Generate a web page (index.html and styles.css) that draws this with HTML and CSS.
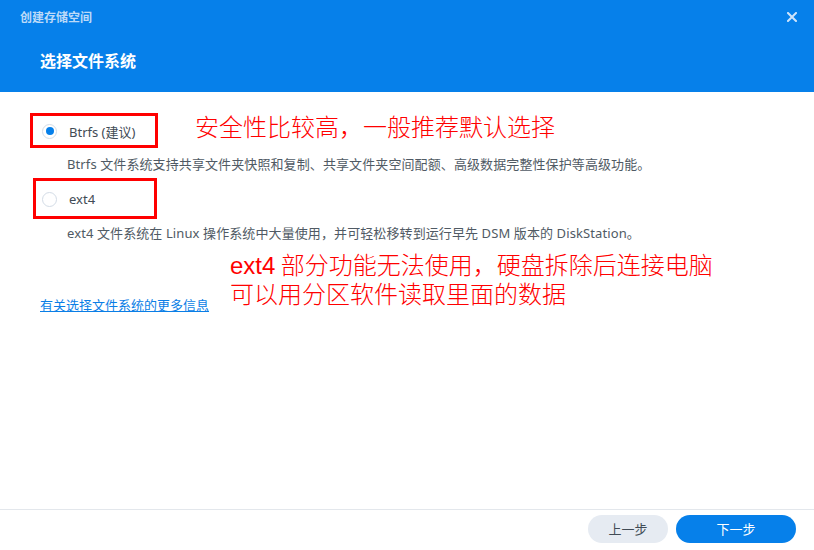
FILE: index.html
```html
<!DOCTYPE html>
<html lang="zh-CN">
<head>
  <meta charset="UTF-8">
  <title>创建存储空间</title>
  <link rel="stylesheet" href="styles.css">
</head>
<body>
  <div class="dialog">
    <div class="header">
      <div class="header-top">
        <span class="window-title">创建存储空间</span>
        <span class="close">
          <svg width="10" height="10" viewBox="0 0 10 10"><path d="M1 1 L9 9 M9 1 L1 9" stroke="#cfe4fb" stroke-width="2" stroke-linecap="square"/></svg>
        </span>
      </div>
      <div class="step-title">选择文件系统</div>
    </div>
    <div class="content">
      <div class="option">
        <span class="radio checked"></span>
        <span class="label">Btrfs (建议)</span>
      </div>
      <div class="desc">Btrfs 文件系统支持共享文件夹快照和复制、共享文件夹空间配额、高级数据完整性保护等高级功能。</div>
      <div class="option">
        <span class="radio"></span>
        <span class="label">ext4</span>
      </div>
      <div class="desc">ext4 文件系统在 Linux 操作系统中大量使用，并可轻松移转到运行早先 DSM 版本的 DiskStation。</div>
      <a class="more-link" href="#">有关选择文件系统的更多信息</a>

      <div class="mark box-btrfs"></div>
      <div class="mark box-ext4"></div>
      <div class="note note-btrfs">安全性比较高，一般推荐默认选择</div>
      <div class="note note-ext4">
        <div class="note-line"><span class="latin">ext4</span> 部分功能无法使用，硬盘拆除后连接电脑</div>
        <div class="note-line">可以用分区软件读取里面的数据</div>
      </div>
    </div>
    <div class="footer">
      <button class="btn btn-prev">上一步</button>
      <button class="btn btn-next">下一步</button>
    </div>
  </div>
</body>
</html>
```

FILE: styles.css
```css
body { margin: 0; font-family: "Noto Sans", "Noto Sans CJK SC", sans-serif; background: #fff; }
.dialog { width: 814px; height: 550px; display: flex; flex-direction: column; }
.header { background: #0680ea; height: 92px; }
.header-top { height: 34px; display: flex; align-items: center; justify-content: space-between; padding: 0 17px 0 20px; }
.window-title { font-size: 12px; font-weight: bold; color: #bcdaf8; }
.close { display: flex; width: 10px; height: 10px; }
.step-title { padding: 16px 0 0 40px; font-size: 16px; font-weight: bold; color: #fff; line-height: 22px; }
.content { flex: 1; position: relative; padding: 29px 40px 0 42px; }
.option { display: flex; align-items: center; gap: 12px; height: 20px; }
.radio { width: 13px; height: 13px; border: 1px solid #d3dce6; border-radius: 50%; background: #fff; position: relative; }
.radio.checked::after { content: ""; position: absolute; left: 2.5px; top: 2.5px; width: 8px; height: 8px; border-radius: 50%; background: #0680ea; }
.label { font-size: 13px; color: #414b55; }
.desc { font-size: 13px; color: #505a64; line-height: 20px; padding-left: 25px; margin: 13px 0 15px; letter-spacing: 0.1px; }
.desc + .option + .desc { margin-top: 14px; }
.more-link { display: inline-block; margin: 37px 0 0 -2px; font-size: 13px; line-height: 20px; color: #0a7ee6; text-decoration: underline; }
.mark { position: absolute; border: 3px solid #f00; }
.box-btrfs { left: 30px; top: 21px; width: 122px; height: 29px; }
.box-ext4 { left: 33px; top: 86px; width: 118px; height: 35px; }
.note { position: absolute; color: #f00; font-family: "Noto Sans CJK SC", sans-serif; font-weight: 300; }
.note-btrfs { left: 195px; top: 18px; font-size: 24px; line-height: 32px; }
.note-ext4 { left: 230px; top: 157px; font-size: 24px; }
.note-line { line-height: 29px; height: 29px; white-space: nowrap; }
.note .latin { font-family: "Liberation Sans", sans-serif; font-weight: normal; }
.footer { border-top: 1px solid #e3e7ec; display: flex; justify-content: flex-end; align-items: center; gap: 8px; padding: 0 18px 3px 0; box-sizing: border-box; height: 41px; }
.btn { height: 28px; border: none; border-radius: 14px; font-family: "Noto Sans CJK SC", sans-serif; font-size: 13px; cursor: pointer; }
.btn-prev { width: 80px; background: #e6ebf2; color: #414b55; }
.btn-next { width: 120px; background: #0680ea; color: #fff; }
```
